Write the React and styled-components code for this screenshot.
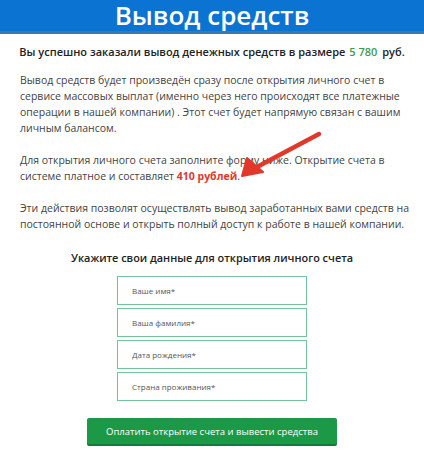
import React from "react";
import styled, { createGlobalStyle } from "styled-components";

const GlobalStyle = createGlobalStyle`
  body {
    margin: 0;
    background: #fff;
    font-family: "Open Sans", "Noto Sans", sans-serif;
    color: #444;
  }
`;

const Page = styled.div`
  position: relative;
  width: 424px;
  height: 452px;
  overflow: hidden;
`;

const Header = styled.div`
  height: 31px;
  background-color: #0b74d2;
  border-bottom: 3px solid #3d7aa8;
  display: flex;
  align-items: center;
  justify-content: center;
`;

const Title = styled.h1`
  margin: 0;
  color: #fff;
  font-size: 26px;
  font-weight: 600;
  line-height: 31px;
`;

const Content = styled.div`
  padding: 0 14px;
`;

const Lead = styled.p`
  margin: 10px 0 0;
  text-align: center;
  white-space: nowrap;
  font-size: 11px;
  font-weight: 600;
  color: #222;
  line-height: 16px;
`;

const Sum = styled.span`
  color: #3d9a4c;
  margin: 0 2px 0 4px;
`;

const Text = styled.p`
  margin: ${(p) => (p.first ? "12px" : "16px")} 0 0 6px;
  font-size: 10.5px;
  line-height: 16px;
  color: #444;
`;

const Price = styled.b`
  color: #e2382c;
  font-weight: 700;
`;

const FormTitle = styled.h3`
  margin: 18px 0 0;
  text-align: center;
  font-size: 10.9px;
  font-weight: 600;
  color: #222;
  line-height: 16px;
`;

const Form = styled.div`
  display: flex;
  flex-direction: column;
  align-items: center;
  gap: 3px;
  margin-top: 10px;
`;

const Field = styled.input`
  box-sizing: border-box;
  width: 190px;
  height: 29px;
  border: 1px solid #72c29c;
  padding: 0 14px;
  font-family: inherit;
  font-size: 8px;
  color: #333;
  outline: none;
  &::placeholder {
    color: #555;
  }
`;

const Submit = styled.button`
  display: block;
  margin: 17px auto 0;
  width: 250px;
  height: 26px;
  border: none;
  border-radius: 2px;
  background-color: #1b9947;
  box-shadow: 0 2px 0 #147a37;
  color: #fff;
  font-family: inherit;
  font-size: 9.5px;
  cursor: pointer;
`;

const Arrow = styled.svg`
  position: absolute;
  left: 233px;
  top: 128px;
`;

const fields = ["Ваше имя*", "Ваша фамилия*", "Дата рождения*", "Страна проживания*"];

const App = () => {
  return (
    <Page>
      <GlobalStyle />
      <Header>
        <Title>Вывод средств</Title>
      </Header>
      <Content>
        <Lead>
          Вы успешно заказали вывод денежных средств в размере
          <Sum>5 780</Sum> руб.
        </Lead>
        <Text first>
          Вывод средств будет произведён сразу после открытия личного счет в
          сервисе массовых выплат (именно через него происходят все платежные
          операции в нашей компании) . Этот счет будет напрямую связан с вашим
          личным балансом.
        </Text>
        <Text>
          Для открытия личного счета заполните форму ниже. Открытие счета в
          системе платное и составляет <Price>410 рублей</Price>.
        </Text>
        <Text>
          Эти действия позволят осуществлять вывод заработанных вами средств на
          постоянной основе и открыть полный доступ к работе в нашей компании.
        </Text>
        <FormTitle>Укажите свои данные для открытия личного счета</FormTitle>
        <Form>
          {fields.map((f) => (
            <Field key={f} placeholder={f} />
          ))}
        </Form>
        <Submit>Оплатить открытие счета и вывести средства</Submit>
      </Content>
      <Arrow width="100" height="60" viewBox="0 0 100 60">
        <path d="M86 6 L22 40" stroke="#e2382c" strokeWidth="4.5" strokeLinecap="round" />
        <path d="M9 48 L14 30 L30 44 Z" fill="#e2382c" stroke="#e2382c" strokeWidth="2" strokeLinejoin="round" />
      </Arrow>
    </Page>
  );
};

export default App;
